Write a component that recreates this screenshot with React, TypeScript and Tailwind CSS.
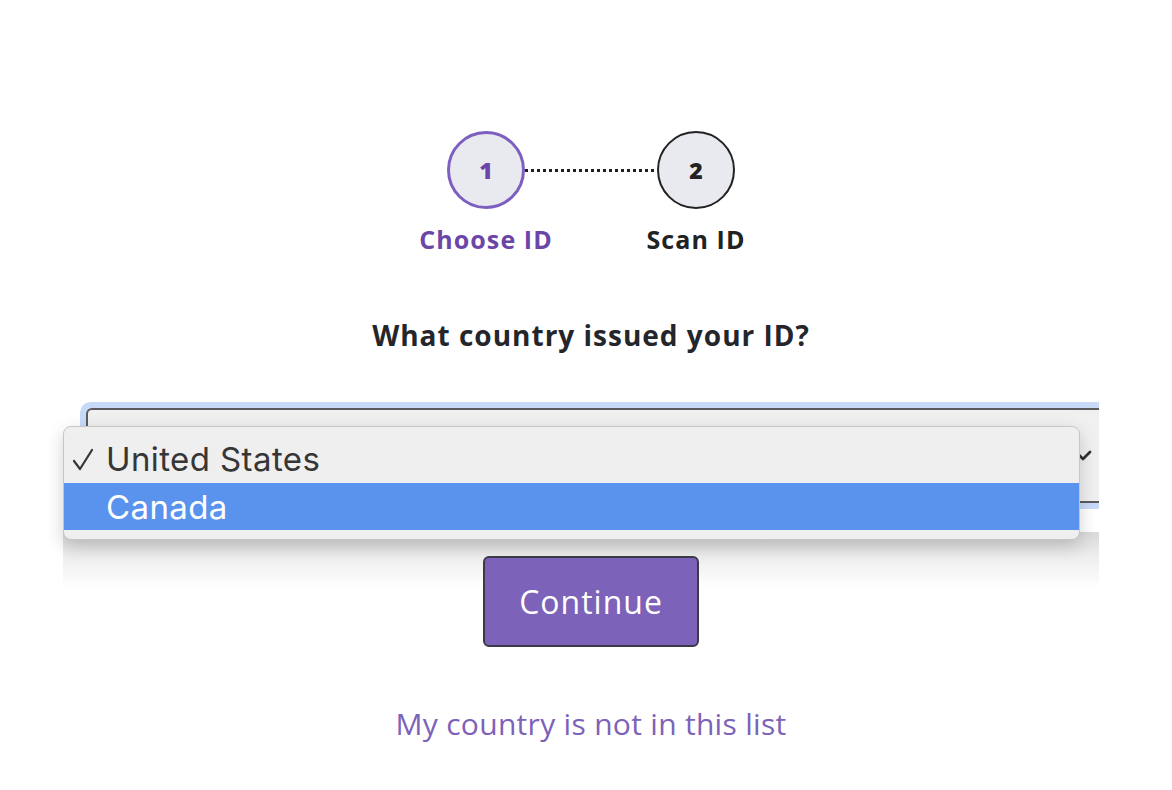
import React from "react";

export default function App() {
  return (
    <div className="min-h-[790px] w-full bg-white flex flex-col items-center pt-[131px] pl-[10px] font-['Open_Sans','Noto_Sans',sans-serif]">
      {/* Stepper */}
      <div className="flex flex-row items-start">
        <div className="flex flex-col items-center w-[78px]">
          <div className="w-[78px] h-[78px] rounded-full border-[3px] border-[#7d5fc0] bg-[#e9eaef] flex items-center justify-center text-[23px] font-extrabold text-[#6b46a8]">
            1
          </div>
          <div className="mt-[15px] whitespace-nowrap text-[25px] tracking-[1.1px] leading-[30px] font-bold text-[#6b46a8]">
            Choose ID
          </div>
        </div>
        <div className="w-[132px] h-[78px] flex items-center">
          <div className="w-full h-[3px] bg-[repeating-linear-gradient(90deg,#1f1f1f_0px,#1f1f1f_3px,transparent_3px,transparent_6px)]" />
        </div>
        <div className="flex flex-col items-center w-[78px]">
          <div className="w-[78px] h-[78px] rounded-full border-2 border-[#222] bg-[#e9eaef] flex items-center justify-center text-[23px] font-extrabold text-[#222]">
            2
          </div>
          <div className="mt-[15px] whitespace-nowrap text-[25px] tracking-[1.1px] leading-[30px] font-bold text-[#222]">
            Scan ID
          </div>
        </div>
      </div>

      {/* Heading */}
      <h1 className="mt-[64px] text-[28px] tracking-[1px] leading-[34px] font-bold text-[#24262b]">
        What country issued your ID?
      </h1>

      {/* Select area */}
      <div className="mt-[50px] w-full pl-[70px] pr-[73px]">
        <div className="relative w-[1019px] h-[107px]">
          <div className="w-[1019px] h-[107px] overflow-hidden rounded-l-[10px]">
            <div className="w-[1040px] h-[107px] rounded-[10px] bg-[#c7daf8] p-[6px]">
              <div className="w-full h-full rounded-[6px] border-2 border-[#5a5a5f] bg-[#f0f0f0] relative">
                <svg
                  className="absolute left-[988px] top-[38px]"
                  width="16"
                  height="14"
                  viewBox="0 0 16 14"
                >
                  <path d="M2 6 L7 11 L14 4" fill="none" stroke="#333" strokeWidth="2.8" strokeLinecap="round" strokeLinejoin="round" />
                </svg>
              </div>
            </div>
          </div>

          {/* shadow band */}
          <div className="absolute left-[-17px] top-[130px] w-[1036px] h-[56px] bg-[linear-gradient(180deg,#d9d9d9_0%,#eeeeee_45%,#ffffff_100%)]" />

          {/* Dropdown menu */}
          <div className="absolute left-[-17px] top-[24px] w-[1017px] h-[114px] rounded-[8px] border border-[#c6c6c6] bg-[#efefef] shadow-[0_6px_18px_rgba(0,0,0,0.18)] pt-[8px] font-['Inter','Liberation_Sans',sans-serif]">
            <div className="relative h-[48px] flex items-center pl-[42px] text-[33px] tracking-[0.4px] leading-[40px] text-[#363636]">
              <svg className="absolute left-[8px] top-[13px]" width="22" height="24" viewBox="0 0 22 24">
                <path d="M2 13 L8 21 L20 2" fill="none" stroke="#363636" strokeWidth="2.2" strokeLinecap="round" strokeLinejoin="round" />
              </svg>
              United States
            </div>
            <div className="h-[47px] flex items-center pl-[42px] text-[33px] tracking-[0.4px] leading-[40px] text-white bg-[#5a93ee]">
              Canada
            </div>
          </div>
        </div>
      </div>

      {/* Continue button */}
      <button className="relative z-10 mt-[47px] w-[216px] h-[91px] rounded-[6px] border-2 border-[#3b3a48] bg-[#7c62b8] text-white text-[32px] tracking-[1px] font-normal">
        Continue
      </button>

      {/* Link */}
      <a className="mt-[58px] text-[30px] tracking-[0.3px] leading-[38px] text-[#7d62b9]">
        My country is not in this list
      </a>
    </div>
  );
}
